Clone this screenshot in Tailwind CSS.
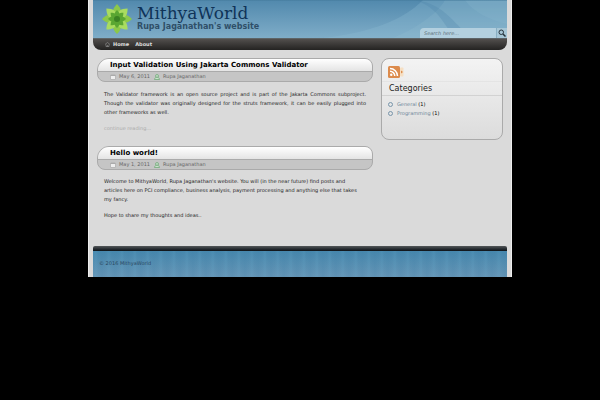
<!DOCTYPE html>
<html lang="en">
  <head>
    <meta charset="UTF-8" />
    <meta name="viewport" content="width=device-width, initial-scale=1.0" />
    <script src="https://cdn.jsdelivr.net/npm/@tailwindcss/browser@4"></script>
    <title>MithyaWorld</title>
  </head>
  <body
    class="min-h-screen bg-black font-['DejaVu_Sans',sans-serif] text-[5px] leading-[9px] text-[#222]"
  >
    <!-- SVG symbols shared by the posts -->
    <svg class="hidden" xmlns="http://www.w3.org/2000/svg">
      <symbol id="icon-date" viewBox="0 0 12 12">
        <rect x="1" y="2" width="10" height="9" rx="1" fill="#eee" stroke="#999" />
        <path d="M1 3h10" stroke="#aaa" stroke-width="2" />
      </symbol>
      <symbol id="icon-author" viewBox="0 0 12 12">
        <circle cx="6" cy="4" r="3" fill="#c9e2cb" stroke="#6fa877" stroke-width="1.500" />
        <path d="M1 11c0-6 10-6 10 0z" fill="#c9e2cb" stroke="#6fa877" stroke-width="1.500" />
      </symbol>
    </svg>

    <div class="mx-auto max-w-[424px] border-x border-[#eee] bg-[#dadada] px-1">
      <!-- Header -->
      <header class="overflow-hidden rounded-b-lg">
        <div
          class="relative flex h-[38px] items-end justify-between overflow-hidden bg-linear-to-b from-[#5189ad] to-[#7fadc8]"
        >
          <svg
            class="absolute inset-0 h-full w-full"
            viewBox="0 0 414 38"
            preserveAspectRatio="none"
          >
            <path d="M230 38C280 32 310 20 330 0h84v38z" fill="#8fbdd3" opacity=".3" />
            <path d="M300 38c20-8 45-24 52-38h62v38z" fill="#a0c9da" opacity=".15" />
            <path d="M323 0c32 5 38 27 58 38h-18C349 24 348 10 323 0z" fill="#467fa6" opacity=".25" />
            <path d="M372 0c8 12 25 20 42 24V0z" fill="#92bfd2" opacity=".2" />
            <path d="M0 .5h414" stroke="#457b9c" opacity=".5" />
          </svg>
          <div class="relative flex h-full items-center gap-1 pl-2">
            <svg class="h-8 w-8" viewBox="0 0 32 32">
              <g fill="#8cc84a">
                <path id="petal" d="M16 16C10 11 11 6 16 1c5 5 6 10 0 15z" />
                <use href="#petal" transform="rotate(90 16 16)" />
                <use href="#petal" transform="rotate(180 16 16)" />
                <use href="#petal" transform="rotate(270 16 16)" />
              </g>
              <g fill="#a9dc60">
                <use href="#petal" transform="rotate(45 16 16)" />
                <use href="#petal" transform="rotate(135 16 16)" />
                <use href="#petal" transform="rotate(225 16 16)" />
                <use href="#petal" transform="rotate(315 16 16)" />
              </g>
              <g fill="#5aa632">
                <path id="leaf" d="M16 16c-4-3-3-6 0-9 3 3 4 6 0 9z" />
                <use href="#leaf" transform="rotate(45 16 16)" />
                <use href="#leaf" transform="rotate(90 16 16)" />
                <use href="#leaf" transform="rotate(135 16 16)" />
                <use href="#leaf" transform="rotate(180 16 16)" />
                <use href="#leaf" transform="rotate(225 16 16)" />
                <use href="#leaf" transform="rotate(270 16 16)" />
                <use href="#leaf" transform="rotate(315 16 16)" />
              </g>
              <circle cx="16" cy="16" r="3" fill="#3b8223" />
            </svg>
            <div class="pb-1">
              <h1
                class="font-['DejaVu_Serif',serif] text-[17px] leading-[18px] text-[#0f3358]"
              >
                <a href="#">MithyaWorld</a>
              </h1>
              <p class="text-[8px] leading-[9px] font-bold text-[#2f4f68]">
                Rupa Jaganathan's website
              </p>
            </div>
          </div>
          <form
            class="relative flex h-[10px] w-[87px] overflow-hidden rounded-tl bg-[#b3d0df]"
          >
            <input
              type="search"
              aria-label="Search"
              placeholder="Search here..."
              class="min-w-0 flex-1 px-1 text-[5px] italic placeholder:text-[#60707c] focus:outline-none"
            />
            <button
              type="submit"
              aria-label="Go"
              class="flex w-[11px] items-center justify-center border-l border-[#89afc2] bg-[#a6c6d6]"
            >
              <svg class="h-2 w-2" viewBox="0 0 16 16" fill="none" stroke="#26333b">
                <circle cx="6.500" cy="6.500" r="4.500" stroke-width="2" />
                <path d="m10 10 5 5" stroke-width="3" />
              </svg>
            </button>
          </form>
        </div>
        <nav
          class="flex h-3 items-center gap-1.5 border-t border-[#5d6467] bg-linear-to-b from-[#524f4d] to-[#242322] px-3 font-bold text-[#dedede]"
        >
          <a href="#" class="flex items-center gap-[3px]">
            <svg class="h-[5px] w-[5px]" viewBox="0 0 10 10" fill="none" stroke="#aaa">
              <path d="M0 5l5-4 5 4M2 5v4h6V5M5 9V6" />
            </svg>
            Home
          </a>
          <a href="#">About</a>
        </nav>
      </header>

      <div class="flex gap-2 px-1 pt-2 pb-[26px]">
        <!-- Posts -->
        <main class="min-w-0 flex-1">
          <article class="h-[88px]">
            <header
              class="overflow-hidden rounded-tl-xl rounded-tr-lg rounded-b-lg border border-[#aaa] bg-[#c5c5c5]"
            >
              <h2
                class="h-[13px] border-b border-[#aaa] bg-linear-to-b from-white to-[#e4e4e4] px-3 text-[7px] leading-[13px] font-bold text-black"
              >
                <a href="#">Input Validation Using Jakarta Commons Validator</a>
              </h2>
              <div class="flex h-[9px] items-center gap-1 px-3 text-[#666]">
                <span class="flex items-center gap-[3px]">
                  <svg class="h-1.5 w-1.5"><use href="#icon-date" /></svg>
                  May 6, 2011
                </span>
                <a href="#" class="flex items-center gap-[3px]">
                  <svg class="h-1.5 w-1.5"><use href="#icon-author" /></svg>
                  Rupa Jaganathan
                </a>
              </div>
            </header>
            <div class="px-[7px] pt-2">
              <p class="text-justify">
                The Validator framework is an open source project and is part of
                the Jakarta Commons subproject. Though the validator was
                originally designed for the struts framework, it can be easily
                plugged into other frameworks as well.
              </p>
              <a href="#" class="mt-[7px] block text-[#aaa]">continue reading...</a>
            </div>
          </article>

          <article>
            <header
              class="overflow-hidden rounded-tl-xl rounded-tr-lg rounded-b-lg border border-[#aaa] bg-[#c5c5c5]"
            >
              <h2
                class="h-[13px] border-b border-[#aaa] bg-linear-to-b from-white to-[#e4e4e4] px-3 text-[7px] leading-[13px] font-bold text-black"
              >
                <a href="#">Hello world!</a>
              </h2>
              <div class="flex h-[9px] items-center gap-1 px-3 text-[#666]">
                <span class="flex items-center gap-[3px]">
                  <svg class="h-1.5 w-1.5"><use href="#icon-date" /></svg>
                  May 1, 2011
                </span>
                <a href="#" class="flex items-center gap-[3px]">
                  <svg class="h-1.5 w-1.5"><use href="#icon-author" /></svg>
                  Rupa Jaganathan
                </a>
              </div>
            </header>
            <div class="space-y-[7px] pt-[7px] pr-3 pl-[7px]">
              <p>
                Welcome to MithyaWorld, Rupa Jaganathan's website. You will (in
                the near future) find posts and articles here on PCI compliance,
                business analysis, payment processing and anything else that
                takes my fancy.
              </p>
              <p>Hope to share my thoughts and ideas..</p>
            </div>
          </article>
        </main>

        <!-- Sidebar -->
        <aside
          class="h-[82px] w-[122px] shrink-0 rounded-lg border border-[#aaa] bg-linear-to-b from-[#f3f3f3] to-[#dcdcdc]"
        >
          <a href="#" aria-label="RSS feed" class="block px-1.5 pt-[7px] pb-[3px]">
            <svg class="h-3 w-4" viewBox="0 0 32 24">
              <rect x="24" y="3" width="7" height="18" rx="2" fill="#f6dfc3" />
              <rect width="24" height="24" rx="3" fill="#dc8b4c" />
              <path d="m26 9 4 3-4 3z" fill="#dc8b4c" />
              <circle cx="6.500" cy="17.500" r="2.500" fill="#fff" />
              <path
                d="M4 10.500a9.500 9.500 0 0 1 9.500 9.500M4 5a15 15 0 0 1 15 15"
                fill="none"
                stroke="#fff"
                stroke-width="3"
              />
            </svg>
          </a>
          <h3
            class="border-y border-t-[#e4e4e4] border-b-[#d2d2d2] px-[7px] text-[8px] leading-[13px] text-[#222]"
          >
            Categories
          </h3>
          <ul class="px-1.5 pt-1 text-black">
            <li class="flex items-center gap-1">
              <span class="h-[5px] w-[5px] rounded-full border border-[#7895aa]"></span>
              <span><a href="#" class="text-[#6d8799]">General</a> (1)</span>
            </li>
            <li class="flex items-center gap-1">
              <span class="h-[5px] w-[5px] rounded-full border border-[#7895aa]"></span>
              <span><a href="#" class="text-[#6d8799]">Programming</a> (1)</span>
            </li>
          </ul>
        </aside>
      </div>

      <!-- Footer -->
      <footer class="text-[#29475f]">
        <div class="h-[5px] rounded-t-xs bg-linear-to-b from-[#54585a] to-[#0c1218]"></div>
        <div class="relative bg-linear-to-b from-[#4687ad] to-[#6595b5] px-1.5 pt-2 pb-[9px]">
          <div
            class="absolute inset-0 bg-[repeating-linear-gradient(90deg,transparent_0px,#6db3d425_3px,transparent_5px,#3f7da525_9px,transparent_13px)]"
          ></div>
          <p class="relative">© 2016 MithyaWorld</p>
        </div>
      </footer>
    </div>
  </body>
</html>
